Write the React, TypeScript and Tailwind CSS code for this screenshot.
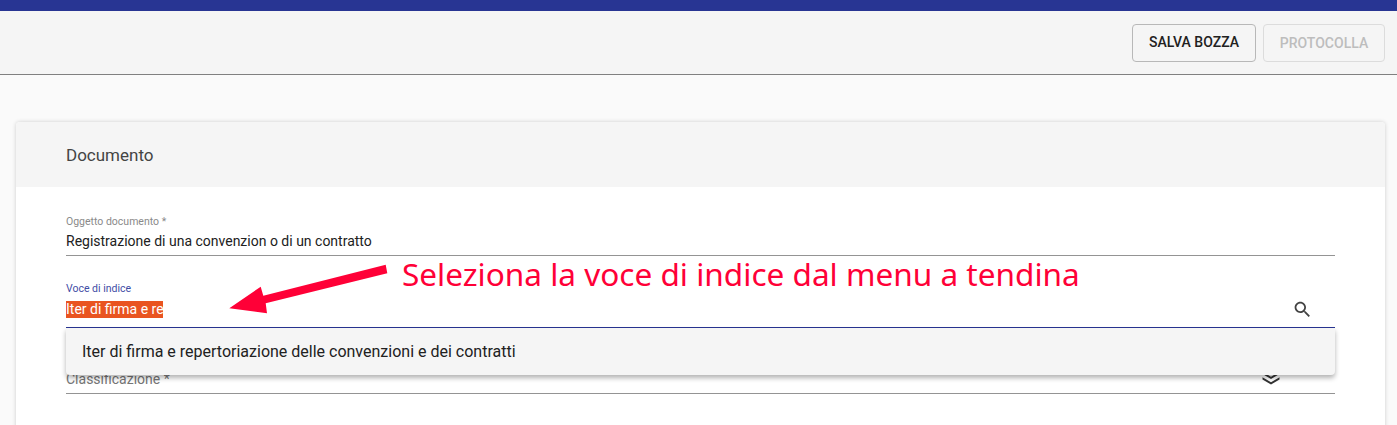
export default function App() {
  return (
    <div className="relative h-[425px] w-[1397px] overflow-hidden bg-[#fafafa] font-['Roboto',sans-serif]">
      <div className="h-[11px] bg-[#283593]" />
      <div className="flex h-[64px] items-center justify-end gap-[7px] border-b border-[#808080] bg-[#f5f5f5] pr-[12px]">
        <button className="h-[38px] w-[124px] rounded-[4px] border border-[#b8b8b8] text-[14px] font-medium text-[#212121]">SALVA BOZZA</button>
        <button className="h-[38px] w-[122px] rounded-[4px] border border-[#dcdcdc] pt-[1px] text-[14px] font-medium text-[#bdbdbd]">PROTOCOLLA</button>
      </div>
      <div className="ml-[16px] mr-[12px] mt-[47px] h-[400px] rounded-[4px] bg-white shadow-[0_0_4px_rgba(0,0,0,0.18)]">
        <div className="flex h-[65px] items-center rounded-t-[4px] bg-[#f5f5f5] px-[50px] pt-[2px] text-[17px] text-[#444444]">Documento</div>
        <div className="relative px-[50px]">
          <div className="h-[69px] border-b border-[#949494] pt-[29px]">
            <div className="text-[10.5px] leading-[12px] text-[#8a8a8a]">Oggetto documento *</div>
            <div className="mt-[3px] text-[14px] leading-[20px] text-[#212121]">Registrazione di una convenzion o di un contratto</div>
          </div>
          <div className="flex h-[72px] items-end justify-between border-b border-[#283593] pb-[9px]">
            <div>
              <div className="text-[10.5px] leading-[12px] text-[#3f4da5]">Voce di indice</div>
              <div className="mt-[6px] h-[17px] w-[97px] overflow-hidden bg-[#e95420] text-[14px] leading-[17px] whitespace-nowrap text-white">Iter di firma e re</div>
            </div>
            <svg viewBox="0 0 24 24" className="mb-[-2px] mr-[22px] h-[21px] w-[21px] fill-[#424242]">
              <path d="M15.5 14h-.79l-.28-.27C15.41 12.59 16 11.11 16 9.5 16 5.91 13.09 3 9.5 3S3 5.91 3 9.5 5.91 16 9.5 16c1.61 0 3.09-.59 4.23-1.57l.27.28v.79l5 4.99L20.49 19l-4.99-5zm-6 0C7.01 14 5 11.99 5 9.5S7.01 5 9.5 5 14 7.01 14 9.5 11.99 14 9.5 14z" />
            </svg>
          </div>
          <div className="flex h-[66px] items-end justify-between border-b border-[#949494] pb-[5px] text-[14px] leading-[18px] text-[#757575]">
            <span>Classificazione *</span>
            <svg viewBox="0 0 24 24" className="mr-[52px] h-[24px] w-[24px] fill-[#333333]">
              <path d="M12 20.5 3.5 15.5v-2.2l8.5 5 8.5-5v2.2L12 20.5zm0-5.5L3.5 10V7.8l8.5 5 8.5-5V10L12 15z" />
            </svg>
          </div>
          <div className="absolute left-[50px] right-[50px] top-[141px] flex h-[47px] items-center rounded-b-[4px] bg-[#f5f5f5] pl-[16px] text-[16px] text-[#212121] shadow-[0_3px_5px_rgba(0,0,0,0.3)]">
            Iter di firma e repertoriazione delle convenzioni e dei contratti
          </div>
        </div>
      </div>
      <svg viewBox="0 0 1397 425" className="absolute left-0 top-0 h-[425px] w-[1397px]">
        <polygon points="385.7,264.7 387.3,273.3 265.7,303.3 267,313.3 229.3,308.3 260.7,286.7 263.3,295.7" fill="#ff0037" />
      </svg>
      <div className="absolute left-[402px] top-[254px] whitespace-nowrap font-['Noto_Sans',sans-serif] text-[31.55px] leading-[40px] text-[#ff0037]">
        Seleziona la voce di indice dal menu a tendina
      </div>
    </div>
  );
}
